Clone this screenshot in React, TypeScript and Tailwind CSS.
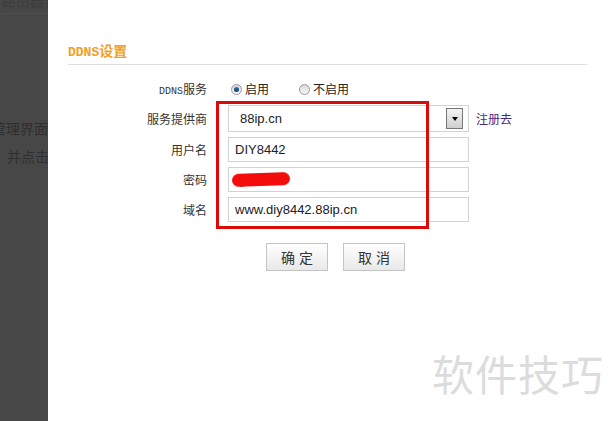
import React from "react";

const cjk = "font-['Noto_Sans_CJK_SC','Noto_Sans',sans-serif]";

function Radio({ checked }: { checked?: boolean }) {
  return (
    <span className="flex h-[11px] w-[11px] items-center justify-center rounded-full border border-[#9a9a9a] bg-gradient-to-b from-[#d8d8d8] to-[#f8f8f8]">
      {checked && <span className="h-[5px] w-[5px] rounded-full bg-gradient-to-b from-[#2d6fb0] to-[#0d3f78]" />}
    </span>
  );
}

function Field({ label, children }: { label: React.ReactNode; children: React.ReactNode }) {
  return (
    <div className="flex items-center">
      <div className="w-[139px] text-right text-[12px] text-[#333]">{label}</div>
      <div className="ml-[21px] flex items-center">{children}</div>
    </div>
  );
}

function TextBox({ value, children }: { value?: string; children?: React.ReactNode }) {
  return (
    <div className="relative flex h-[25px] w-[241px] items-center border border-[#d2d2d2] bg-white pl-[6px] font-['Liberation_Sans',sans-serif] text-[13px] text-[#222]">
      {value}
      {children}
    </div>
  );
}

function Btn({ text }: { text: string }) {
  return (
    <button className="h-[28px] w-[62px] border border-[#c4c4c4] bg-gradient-to-b from-white to-[#e9e9e9] indent-[4px] text-[14px] tracking-[4px] text-[#333]">
      {text}
    </button>
  );
}

export default function App() {
  return (
    <div className={`relative flex h-[421px] w-[610px] overflow-hidden ${cjk}`}>
      {/* dimmed page behind the dialog */}
      <aside className="w-[48px] shrink-0 overflow-hidden bg-[#474747] text-[14px] text-[#2f2f2f]">
        <div className="-mt-[10px] ml-[2px] whitespace-nowrap border-b border-[#505050] pb-[2px] text-[#3d3d3d]">
          路由器界面
        </div>
        <div className="ml-[-8px] mt-[104px] whitespace-nowrap leading-[20px]">管理界面</div>
        <div className="ml-[7px] mt-[8px] whitespace-nowrap leading-[20px]">并点击</div>
      </aside>

      <main className="relative flex-1 bg-white pl-[20px] pr-[23px] pt-[40px]">
        <div className="h-[25px] border-b border-[#e0e0e0] text-[14px] font-bold leading-[20px] text-[#f2a11c]">
          <span className="font-['Liberation_Mono',monospace] text-[13px]">DDNS</span>设置
        </div>

        <div className="mt-[13px] flex h-[22px] items-center">
          <div className="w-[139px] text-right text-[12px] text-[#333]">
            <span className="font-['Liberation_Mono',monospace] text-[10px]">DDNS</span>服务
          </div>
          <div className="ml-[24px] flex items-center text-[12px] text-[#222]">
            <Radio checked />
            <span className="ml-[3px]">启用</span>
            <span className="ml-[30px]">
              <Radio />
            </span>
            <span className="ml-[3px]">不启用</span>
          </div>
        </div>

        <div className="mt-[5px] flex h-[27px] items-center">
          <div className="w-[139px] text-right text-[12px] text-[#333]">服务提供商</div>
          <div className="ml-[21px] flex items-center">
            <div className="flex h-[27px] w-[241px] items-center justify-between border border-[#d2d2d2] bg-white pl-[11px] pr-[5px] font-['Liberation_Sans',sans-serif] text-[13px] text-[#222]">
              88ip.cn
              <span className="flex h-[21px] w-[17px] items-center justify-center border border-[#777] bg-gradient-to-b from-[#f4f4f4] to-[#cfcfcf]">
                <span className="h-0 w-0 border-x-[3.5px] border-t-[4px] border-x-transparent border-t-black" />
              </span>
            </div>
            <span className="ml-[7px] text-[12px] text-[#4b2a84]">注册去</span>
          </div>
        </div>

        <div className="mt-[5px]">
          <Field label="用户名">
            <TextBox value="DIY8442" />
          </Field>
        </div>
        <div className="mt-[5px]">
          <Field label="密码">
            <TextBox>
              <span className="absolute left-[10px] top-[8px] text-[11px] leading-none text-[#555]">g</span>
              <span className="absolute left-[3px] top-[5px] h-[13px] w-[58px] -rotate-[2deg] rounded-full bg-[#f20c0c] blur-[0.4px]" />
            </TextBox>
          </Field>
        </div>
        <div className="mt-[5px]">
          <Field label="域名">
            <TextBox value="www.diy8442.88ip.cn" />
          </Field>
        </div>

        <div className="mt-[21px] flex gap-[15px] pl-[198px]">
          <Btn text="确定" />
          <Btn text="取消" />
        </div>

        {/* highlight box drawn over the provider fields */}
        <div className="absolute left-[168px] top-[101px] h-[128px] w-[213px] border-[3px] border-[#dd0a0a]" />

        <div className="absolute left-[384px] top-[343px] text-[42px] leading-[60px] tracking-[1px] text-[#dcdcdc]">
          软件技巧
        </div>
      </main>
    </div>
  );
}
